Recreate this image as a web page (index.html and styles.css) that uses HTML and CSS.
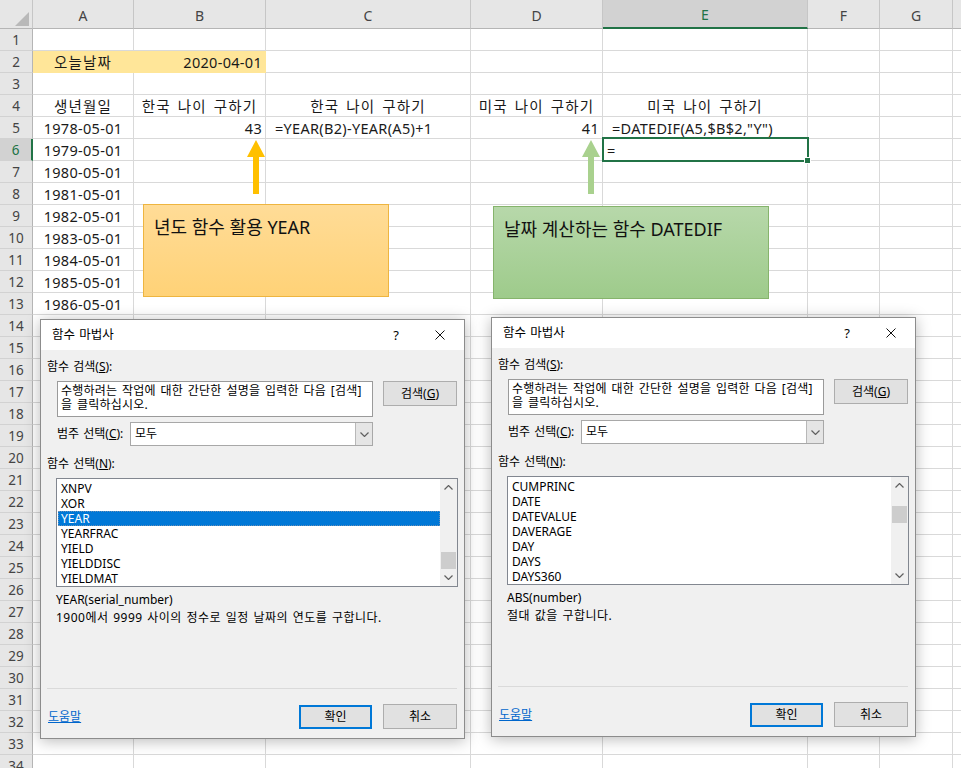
FILE: index.html
```html
<!DOCTYPE html>
<html lang="ko">
<head>
    <meta charset="UTF-8">
    <meta name="viewport" content="width=device-width, initial-scale=1.0">
    <title>나이 구하기 - 함수 마법사</title>
    <link rel="stylesheet" href="styles.css">
</head>
<body>
<div class="workbook">

    <table class="sheet">
        <colgroup>
            <col class="c-head"><col class="c-a"><col class="c-b"><col class="c-c"><col class="c-d"><col class="c-e"><col class="c-f"><col class="c-g"><col class="c-h">
        </colgroup>
        <thead>
            <tr><th class="corner"><span class="tri"></span></th><th>A</th><th>B</th><th>C</th><th>D</th><th class="sel">E</th><th>F</th><th>G</th><th></th></tr>
        </thead>
        <tbody>
            <tr><th>1</th><td></td><td></td><td></td><td></td><td></td><td></td><td></td><td></td></tr>
            <tr><th>2</th><td class="fill ctr ko">오늘날짜</td><td class="fill num">2020-04-01</td><td></td><td></td><td></td><td></td><td></td><td></td></tr>
            <tr><th>3</th><td></td><td></td><td></td><td></td><td></td><td></td><td></td><td></td></tr>
            <tr><th>4</th><td class="ctr ko">생년월일</td><td class="ctr ko">한국 나이 구하기</td><td class="ctr ko">한국 나이 구하기</td><td class="ctr ko">미국 나이 구하기</td><td class="ctr ko">미국 나이 구하기</td><td></td><td></td><td></td></tr>
            <tr><th>5</th><td class="ctr">1978-05-01</td><td class="num">43</td><td class="fx">=YEAR(B2)-YEAR(A5)+1</td><td class="num">41</td><td class="fx">=DATEDIF(A5,$B$2,"Y")</td><td></td><td></td><td></td></tr>
            <tr><th class="sel">6</th><td class="ctr">1979-05-01</td><td></td><td></td><td></td><td class="active">=</td><td></td><td></td><td></td></tr>
            <tr><th>7</th><td class="ctr">1980-05-01</td><td></td><td></td><td></td><td></td><td></td><td></td><td></td></tr>
            <tr><th>8</th><td class="ctr">1981-05-01</td><td></td><td></td><td></td><td></td><td></td><td></td><td></td></tr>
            <tr><th>9</th><td class="ctr">1982-05-01</td><td></td><td></td><td></td><td></td><td></td><td></td><td></td></tr>
            <tr><th>10</th><td class="ctr">1983-05-01</td><td></td><td></td><td></td><td></td><td></td><td></td><td></td></tr>
            <tr><th>11</th><td class="ctr">1984-05-01</td><td></td><td></td><td></td><td></td><td></td><td></td><td></td></tr>
            <tr><th>12</th><td class="ctr">1985-05-01</td><td></td><td></td><td></td><td></td><td></td><td></td><td></td></tr>
            <tr><th>13</th><td class="ctr">1986-05-01</td><td></td><td></td><td></td><td></td><td></td><td></td><td></td></tr>
            <tr><th>14</th><td class="ctr">1987-05-01</td><td></td><td></td><td></td><td></td><td></td><td></td><td></td></tr>
            <tr><th>15</th><td></td><td></td><td></td><td></td><td></td><td></td><td></td><td></td></tr>
            <tr><th>16</th><td></td><td></td><td></td><td></td><td></td><td></td><td></td><td></td></tr>
            <tr><th>17</th><td></td><td></td><td></td><td></td><td></td><td></td><td></td><td></td></tr>
            <tr><th>18</th><td></td><td></td><td></td><td></td><td></td><td></td><td></td><td></td></tr>
            <tr><th>19</th><td></td><td></td><td></td><td></td><td></td><td></td><td></td><td></td></tr>
            <tr><th>20</th><td></td><td></td><td></td><td></td><td></td><td></td><td></td><td></td></tr>
            <tr><th>21</th><td></td><td></td><td></td><td></td><td></td><td></td><td></td><td></td></tr>
            <tr><th>22</th><td></td><td></td><td></td><td></td><td></td><td></td><td></td><td></td></tr>
            <tr><th>23</th><td></td><td></td><td></td><td></td><td></td><td></td><td></td><td></td></tr>
            <tr><th>24</th><td></td><td></td><td></td><td></td><td></td><td></td><td></td><td></td></tr>
            <tr><th>25</th><td></td><td></td><td></td><td></td><td></td><td></td><td></td><td></td></tr>
            <tr><th>26</th><td></td><td></td><td></td><td></td><td></td><td></td><td></td><td></td></tr>
            <tr><th>27</th><td></td><td></td><td></td><td></td><td></td><td></td><td></td><td></td></tr>
            <tr><th>28</th><td></td><td></td><td></td><td></td><td></td><td></td><td></td><td></td></tr>
            <tr><th>29</th><td></td><td></td><td></td><td></td><td></td><td></td><td></td><td></td></tr>
            <tr><th>30</th><td></td><td></td><td></td><td></td><td></td><td></td><td></td><td></td></tr>
            <tr><th>31</th><td></td><td></td><td></td><td></td><td></td><td></td><td></td><td></td></tr>
            <tr><th>32</th><td></td><td></td><td></td><td></td><td></td><td></td><td></td><td></td></tr>
            <tr><th>33</th><td></td><td></td><td></td><td></td><td></td><td></td><td></td><td></td></tr>
            <tr><th>34</th><td></td><td></td><td></td><td></td><td></td><td></td><td></td><td></td></tr>
        </tbody>
    </table>

    <!-- shapes drawn on the sheet -->
    <svg class="arrow arrow-year" width="18" height="54" viewBox="0 0 18 54"><polygon points="9,0 18,17 12,17 12,54 6,54 6,17 0,17"/></svg>
    <svg class="arrow arrow-datedif" width="18" height="54" viewBox="0 0 18 54"><polygon points="9,0 18,17 12,17 12,54 6,54 6,17 0,17"/></svg>

    <div class="note note-year">년도 함수 활용 YEAR</div>
    <div class="note note-datedif">날짜 계산하는 함수 DATEDIF</div>

    <!-- function wizard: YEAR -->
    <div class="dialog dlg-left">
        <div class="dlg-title">
            <span class="dlg-name">함수 마법사</span>
            <span class="dlg-help">?</span>
            <span class="dlg-close"><svg width="10" height="10" viewBox="0 0 10 10"><path d="M0.5 0.5L9.5 9.5M9.5 0.5L0.5 9.5"/></svg></span>
        </div>
        <div class="dlg-body">
            <div class="lbl">함수 검색(<u>S</u>):</div>
            <div class="search-row">
                <div class="search-box">수행하려는 작업에 대한 간단한 설명을 입력한 다음 [검색]<br>을 클릭하십시오.</div>
                <div class="btn">검색(<u>G</u>)</div>
            </div>
            <div class="cat-row">
                <span class="cat-lbl">범주 선택(<u>C</u>):</span>
                <div class="combo"><span class="combo-val">모두</span><span class="combo-btn"><svg width="9" height="5" viewBox="0 0 9 5"><path d="M0.5 0.5L4.5 4.5L8.5 0.5"/></svg></span></div>
            </div>
            <div class="lbl lbl-list">함수 선택(<u>N</u>):</div>
            <div class="fn-list">
                <ul class="items">
                    <li>XNPV</li>
                    <li>XOR</li>
                    <li class="picked">YEAR</li>
                    <li>YEARFRAC</li>
                    <li>YIELD</li>
                    <li>YIELDDISC</li>
                    <li>YIELDMAT</li>
                </ul>
                <div class="vscroll">
                    <span class="sb-arrow"><svg width="9" height="5" viewBox="0 0 9 5"><path d="M0.5 4.5L4.5 0.5L8.5 4.5"/></svg></span>
                    <span class="sb-track"><span class="sb-thumb" style="margin-top: 56px"></span></span>
                    <span class="sb-arrow"><svg width="9" height="5" viewBox="0 0 9 5"><path d="M0.5 0.5L4.5 4.5L8.5 0.5"/></svg></span>
                </div>
            </div>
            <div class="syntax">YEAR(serial_number)</div>
            <div class="desc">1900에서 9999 사이의 정수로 일정 날짜의 연도를 구합니다.</div>
            <div class="dlg-foot">
                <a class="help-link" href="#">도움말</a>
                <div class="btn btn-ok">확인</div>
                <div class="btn">취소</div>
            </div>
        </div>
    </div>

    <!-- function wizard: DATEDIF -->
    <div class="dialog dlg-right">
        <div class="dlg-title">
            <span class="dlg-name">함수 마법사</span>
            <span class="dlg-help">?</span>
            <span class="dlg-close"><svg width="10" height="10" viewBox="0 0 10 10"><path d="M0.5 0.5L9.5 9.5M9.5 0.5L0.5 9.5"/></svg></span>
        </div>
        <div class="dlg-body">
            <div class="lbl">함수 검색(<u>S</u>):</div>
            <div class="search-row">
                <div class="search-box">수행하려는 작업에 대한 간단한 설명을 입력한 다음 [검색]<br>을 클릭하십시오.</div>
                <div class="btn">검색(<u>G</u>)</div>
            </div>
            <div class="cat-row">
                <span class="cat-lbl">범주 선택(<u>C</u>):</span>
                <div class="combo"><span class="combo-val">모두</span><span class="combo-btn"><svg width="9" height="5" viewBox="0 0 9 5"><path d="M0.5 0.5L4.5 4.5L8.5 0.5"/></svg></span></div>
            </div>
            <div class="lbl lbl-list">함수 선택(<u>N</u>):</div>
            <div class="fn-list">
                <ul class="items">
                    <li>CUMPRINC</li>
                    <li>DATE</li>
                    <li>DATEVALUE</li>
                    <li>DAVERAGE</li>
                    <li>DAY</li>
                    <li>DAYS</li>
                    <li>DAYS360</li>
                </ul>
                <div class="vscroll">
                    <span class="sb-arrow"><svg width="9" height="5" viewBox="0 0 9 5"><path d="M0.5 4.5L4.5 0.5L8.5 4.5"/></svg></span>
                    <span class="sb-track"><span class="sb-thumb" style="margin-top: 12px"></span></span>
                    <span class="sb-arrow"><svg width="9" height="5" viewBox="0 0 9 5"><path d="M0.5 0.5L4.5 4.5L8.5 0.5"/></svg></span>
                </div>
            </div>
            <div class="syntax">ABS(number)</div>
            <div class="desc">절대 값을 구합니다.</div>
            <div class="dlg-foot">
                <a class="help-link" href="#">도움말</a>
                <div class="btn btn-ok">확인</div>
                <div class="btn">취소</div>
            </div>
        </div>
    </div>

</div>
</body>
</html>
```

FILE: styles.css
```css
body {
    margin: 0;
    background: #fff;
    overflow: hidden;
    font-family: "Noto Sans", "Noto Sans CJK KR", sans-serif;
    color: #000;
}

.workbook {
    position: relative;
    width: 961px;
    height: 768px;
    overflow: hidden;
}

/* ---------- sheet grid ---------- */

.sheet {
    border-collapse: separate;
    border-spacing: 0;
    table-layout: fixed;
    width: 993px;
    font-size: 14.5px;
    letter-spacing: 0.3px;
    word-spacing: 2px;
}

.c-head { width: 33px; }
.c-a { width: 101px; }
.c-b { width: 132px; }
.c-c { width: 205px; }
.c-d { width: 132px; }
.c-e { width: 205px; }
.c-f { width: 72px; }
.c-g { width: 73px; }
.c-h { width: 40px; }

.sheet th,
.sheet td {
    box-sizing: border-box;
    padding: 0 3px;
    white-space: nowrap;
    font-weight: normal;
}

.sheet td {
    height: 22px;
    line-height: 20px;
    border-right: 1px solid #d9d9d9;
    border-bottom: 1px solid #d9d9d9;
    color: #1a1a1a;
}

.sheet td.ko {
    letter-spacing: 1.2px;
}

.sheet thead th {
    height: 29px;
    background: #e6e6e6;
    color: #444;
    font-size: 14px;
    letter-spacing: 0;
    border-right: 1px solid #c6c6c6;
    border-bottom: 1px solid #b5b5b5;
    padding-top: 2px;
}

.sheet thead th.sel {
    background: #d2d2d2;
    color: #217346;
    border-bottom: 2px solid #217346;
}

.sheet tbody th {
    height: 22px;
    background: #e6e6e6;
    color: #444;
    font-size: 13.5px;
    letter-spacing: 0;
    border-right: 1px solid #b5b5b5;
    border-bottom: 1px solid #d2d2d2;
    padding: 0;
}

.sheet tbody th.sel {
    background: #d2d2d2;
    color: #217346;
    border-right: 2px solid #217346;
}

.corner {
    position: relative;
}

.tri {
    position: absolute;
    right: 3px;
    bottom: 2px;
    width: 0;
    height: 0;
    border-left: 14px solid transparent;
    border-bottom: 14px solid #b9b9b9;
}

.ctr { text-align: center; }
.num { text-align: right; }
.sheet td.fx { padding-left: 9px; }

.sheet td.fill {
    background: #ffe699;
    border-color: #ffe699;
}

.sheet td.active {
    position: relative;
    padding-left: 4px;
}

.sheet td.active::after {
    content: "";
    position: absolute;
    left: -1px;
    top: -2px;
    right: -2px;
    bottom: -2px;
    border: 2px solid #217346;
}

.sheet td.active::before {
    content: "";
    position: absolute;
    right: -4px;
    bottom: -4px;
    width: 5px;
    height: 5px;
    background: #217346;
    border: 1px solid #fff;
    z-index: 1;
}

/* ---------- shapes on the sheet ---------- */

.arrow {
    position: absolute;
    top: 140px;
}

.arrow-year { left: 247px; fill: #ffc000; }
.arrow-datedif { left: 582px; fill: #a9d18e; }

.note {
    position: absolute;
    box-sizing: border-box;
    height: 93px;
    padding: 10px 10px;
    font-size: 18px;
    line-height: 24px;
    color: #111;
}

.note-year {
    left: 143px;
    top: 204px;
    width: 246px;
    background: linear-gradient(#ffdc97, #ffd277);
    border: 1px solid #eeb540;
}

.note-datedif {
    left: 493px;
    top: 206px;
    width: 276px;
    background: linear-gradient(#b7d8aa, #9ecb8b);
    border: 1px solid #86b46c;
}

/* ---------- function wizard dialogs ---------- */

.dialog {
    position: absolute;
    box-sizing: border-box;
    width: 425px;
    height: 420px;
    display: flex;
    flex-direction: column;
    background: #f0f0f0;
    border: 1px solid #8c8c8c;
    box-shadow: 0 2px 14px rgba(0, 0, 0, 0.28);
    font-size: 12px;
    line-height: 16px;
    word-spacing: 1px;
    z-index: 2;
}

.dlg-left { left: 40px; top: 319px; }
.dlg-right { left: 491px; top: 317px; }

.dlg-title {
    display: flex;
    align-items: center;
    height: 30px;
    background: #fff;
    padding-left: 11px;
}

.dlg-name {
    flex: 1;
    font-size: 12.5px;
}

.dlg-help {
    width: 20px;
    text-align: center;
    font-size: 13px;
    margin-right: 11px;
}

.dlg-close {
    width: 46px;
    display: flex;
    justify-content: center;
    margin-right: 1px;
}

.dlg-close svg {
    stroke: #111;
    stroke-width: 1;
}

.dlg-body {
    flex: 1;
    display: flex;
    flex-direction: column;
    padding: 9px 7px 9px 6px;
}

.lbl {
    height: 16px;
}

.lbl-list {
    margin-top: 10px;
}

.search-row {
    display: flex;
    align-items: flex-start;
    gap: 10px;
    margin-top: 6px;
    padding-left: 10px;
}

.search-box {
    box-sizing: border-box;
    width: 316px;
    height: 36px;
    padding: 2px 2px 2px 3px;
    line-height: 14px;
    background: #fff;
    border: 1px solid #9a9a9a;
    white-space: nowrap;
    overflow: hidden;
    letter-spacing: 0.2px;
    word-spacing: 1.5px;
}

.btn {
    box-sizing: border-box;
    width: 74px;
    height: 25px;
    display: flex;
    align-items: center;
    justify-content: center;
    background: #e1e1e1;
    border: 1px solid #adadad;
}

.cat-row {
    display: flex;
    align-items: center;
    margin-top: 5px;
    padding-left: 10px;
}

.cat-lbl {
    width: 73px;
}

.combo {
    box-sizing: border-box;
    width: 243px;
    height: 24px;
    display: flex;
    background: #fff;
    border: 1px solid #a8a8a8;
}

.combo-val {
    flex: 1;
    padding-left: 4px;
    line-height: 22px;
}

.combo-btn {
    width: 16px;
    display: flex;
    align-items: center;
    justify-content: center;
    background: #e5e5e5;
    border-left: 1px solid #b8b8b8;
}

.combo-btn svg,
.sb-arrow svg {
    fill: none;
    stroke: #606060;
    stroke-width: 1.2;
}

.fn-list {
    box-sizing: border-box;
    display: flex;
    width: 402px;
    height: 109px;
    margin-top: 6px;
    margin-left: 9px;
    background: #fff;
    border: 1px solid #828790;
}

.items {
    flex: 1;
    list-style: none;
    margin: 0;
    padding: 2px 0 0 1px;
}

.items li {
    height: 15px;
    line-height: 15px;
    padding-left: 3px;
}

.items li.picked {
    background: #0078d7;
    color: #fff;
    outline: 1px dotted #6a8fb5;
    outline-offset: -1px;
}

.vscroll {
    width: 17px;
    display: flex;
    flex-direction: column;
    background: #f0f0f0;
}

.sb-arrow {
    height: 17px;
    display: flex;
    align-items: center;
    justify-content: center;
}

.sb-track {
    flex: 1;
    display: flex;
    flex-direction: column;
    padding: 0 1px;
}

.sb-thumb {
    height: 17px;
    background: #cdcdcd;
}

.syntax {
    margin-top: 4px;
    margin-left: 9px;
    line-height: 18px;
}

.desc {
    margin-left: 9px;
    line-height: 18px;
    letter-spacing: 0.5px;
}

.dlg-foot {
    margin-top: auto;
    display: flex;
    align-items: center;
    gap: 11px;
    padding-top: 15px;
    border-top: 1px solid #dadada;
}

.help-link {
    flex: 1;
    color: #0066cc;
    text-decoration: underline;
    margin-left: 1px;
}

.btn-ok {
    width: 73px;
    height: 24px;
    border: 2px solid #0078d7;
}
```
